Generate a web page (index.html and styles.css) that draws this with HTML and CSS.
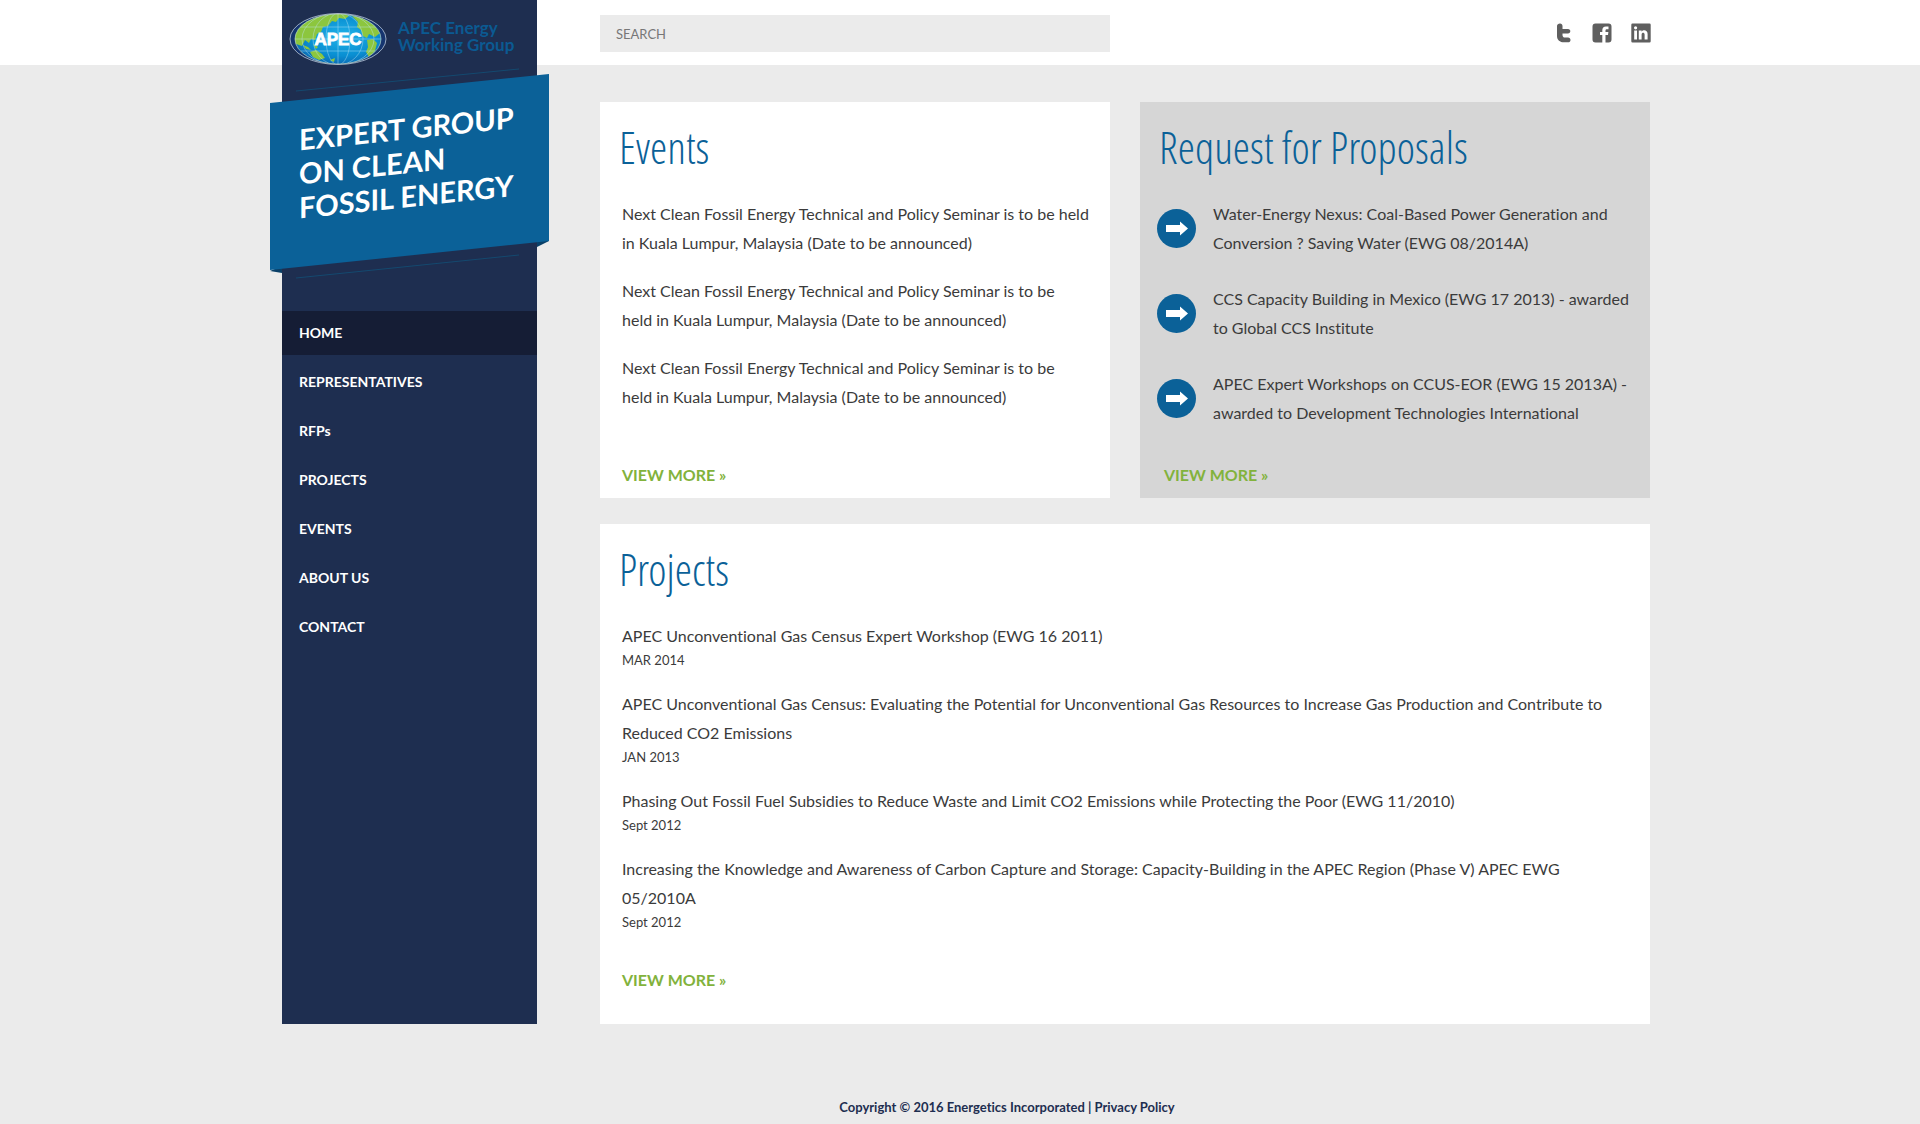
FILE: index.html
```html
<!DOCTYPE html>
<html lang="en">
<head>
<meta charset="utf-8">
<meta name="viewport" content="width=device-width, initial-scale=1">
<title>Expert Group on Clean Fossil Energy</title>
<link rel="stylesheet" href="styles.css">
</head>
<body>
<div class="page">
  <aside class="sidebar">
    <a class="brand" href="#">
      <svg class="brand-logo" viewBox="0 0 98 54" role="img" aria-label="APEC">
        <defs>
          <radialGradient id="sea" cx="55%" cy="45%" r="60%">
            <stop offset="0" stop-color="#22b4ea"/>
            <stop offset="0.6" stop-color="#0a8fd2"/>
            <stop offset="1" stop-color="#0a5ca8"/>
          </radialGradient>
          <clipPath id="globe"><ellipse cx="49" cy="27" rx="43" ry="25"/></clipPath>
        </defs>
        <ellipse cx="49" cy="27" rx="48" ry="25.5" fill="#15356f" stroke="#b9c6d8" stroke-width="0.8"/>
        <g clip-path="url(#globe)">
          <rect width="98" height="54" fill="url(#sea)"/>
          <g fill="#8cc63f">
            <path d="M4 24L10 12L22 5L36 1L54 1L60 4L56 7L50 6L47 10L43 9L39 14L34 15L32 20L28 22L26 28L22 27L20 31L16 28L13 34L7 32Z"/>
            <path d="M63 4L74 6L86 14L91 21L86 25L80 22L78 26L74 24L72 18L68 15L69 10Z"/>
            <path d="M78 28L84 27L88 31L86 39L80 45L77 40L79 35Z"/>
            <path d="M21 40L27 38L33 42L36 46L30 48L24 45Z"/>
            <path d="M14 33L19 35L22 38L17 37ZM24 32L29 35L27 37ZM41 48L46 46L45 50Z"/>
          </g>
          <g fill="none" stroke="#bfe6f7" stroke-width="0.6" opacity="0.7">
            <path d="M49 1V53M6 27H92M11 15H87M12 39H86"/>
            <ellipse cx="49" cy="27" rx="12" ry="26"/>
            <ellipse cx="49" cy="27" rx="25" ry="26"/>
            <ellipse cx="49" cy="27" rx="36" ry="26"/>
          </g>
        </g>
        <ellipse cx="49" cy="27" rx="43" ry="25" fill="none" stroke="#d8e6c8" stroke-width="0.6"/>
        <text class="brand-mark" x="49" y="33" text-anchor="middle">APEC</text>
      </svg>
      <span class="brand-name">APEC Energy<br>Working Group</span>
    </a>

    <div class="banner">
      <svg class="banner-shape" viewBox="0 0 279 212" preserveAspectRatio="none" aria-hidden="true">
        <path d="M26 23L249 1M26 210L249 187" stroke="#14496f" fill="none"/>
        <path d="M0 203L12 205V198ZM279 173L267 179V172Z" fill="#0a4068"/>
        <path d="M0 35L279 6V173L0 202Z" fill="#0b6198"/>
      </svg>
      <h1 class="banner-title">EXPERT GROUP<br>ON CLEAN<br>FOSSIL ENERGY</h1>
    </div>

    <nav class="nav" aria-label="Main">
      <a class="nav-link nav-link-active" href="#" aria-current="page">HOME</a>
      <a class="nav-link" href="#">REPRESENTATIVES</a>
      <a class="nav-link" href="#">RFPs</a>
      <a class="nav-link" href="#">PROJECTS</a>
      <a class="nav-link" href="#">EVENTS</a>
      <a class="nav-link" href="#">ABOUT US</a>
      <a class="nav-link" href="#">CONTACT</a>
    </nav>
  </aside>

  <div class="content">
    <header class="topbar">
      <input class="search" type="search" placeholder="SEARCH" aria-label="Search">
      <div class="social">
        <a class="social-link" href="#" aria-label="Twitter">
          <svg viewBox="0 0 20 20"><path d="M7 0.500C8.500 0.500 9.500 1.500 9.500 3V6H15C16.500 6 17.300 7 17.300 8.200S16.500 10.400 15 10.400H9.500V12C9.500 13.500 10.300 14.600 12 14.600H15C16.500 14.600 17.500 15.600 17.500 17S16.500 19.300 15 19.300H11C7 19.300 4 17 4 13V3C4 1.500 5.300 0.500 7 0.500Z"/></svg>
        </a>
        <a class="social-link" href="#" aria-label="Facebook">
          <svg viewBox="0 0 20 20"><path d="M3.500 0.500H16.500Q19.500 0.500 19.500 3.500V16.500Q19.500 19.500 16.500 19.500H13.500V12H16L16.400 9H13.500V7.500C13.500 6.500 14 6.200 15 6.200H16.500V3.500H14C11.500 3.500 10.300 5 10.300 7.200V9H8V12H10.300V19.500H3.500Q0.500 19.500 0.500 16.500V3.500Q0.500 0.500 3.500 0.500Z"/></svg>
        </a>
        <a class="social-link" href="#" aria-label="LinkedIn">
          <svg viewBox="0 0 20 20"><path fill-rule="evenodd" d="M1.500 0.500H18.500Q19.700 0.500 19.700 1.700V18.300Q19.700 19.500 18.500 19.500H1.500Q0.300 19.500 0.300 18.300V1.700Q0.300 0.500 1.500 0.500ZM3.200 7.500V16.500H6V7.500ZM4.600 3.200A1.600 1.600 0 1 0 4.600 6.400A1.600 1.600 0 1 0 4.600 3.200ZM7.800 7.500V16.500H10.600V11.500C10.600 9 13.600 9 13.600 11.500V16.500H16.600V11C16.600 7 12.300 6.300 10.600 8.700V7.500Z"/></svg>
        </a>
      </div>
    </header>

    <main class="cards">
      <section class="card">
        <h2 class="card-title">Events</h2>
        <div class="entries">
          <p>Next Clean Fossil Energy Technical and Policy Seminar is to be held<br>in Kuala Lumpur, Malaysia (Date to be announced)</p>
          <p>Next Clean Fossil Energy Technical and Policy Seminar is to be<br>held in Kuala Lumpur, Malaysia (Date to be announced)</p>
          <p>Next Clean Fossil Energy Technical and Policy Seminar is to be<br>held in Kuala Lumpur, Malaysia (Date to be announced)</p>
        </div>
        <a class="more" href="#">VIEW MORE »</a>
      </section>

      <section class="card card-grey">
        <h2 class="card-title">Request for Proposals</h2>
        <ul class="proposals">
          <li class="proposal">
            <svg class="arrow" viewBox="0 0 39 39" aria-hidden="true"><circle cx="19.500" cy="19.500" r="19.500"/><path d="M9 16H23V12.500L31 19.500L23 26.500V23H9Z"/></svg>
            <p>Water-Energy Nexus: Coal-Based Power Generation and Conversion ? Saving Water (EWG 08/2014A)</p>
          </li>
          <li class="proposal">
            <svg class="arrow" viewBox="0 0 39 39" aria-hidden="true"><circle cx="19.500" cy="19.500" r="19.500"/><path d="M9 16H23V12.500L31 19.500L23 26.500V23H9Z"/></svg>
            <p>CCS Capacity Building in Mexico (EWG 17 2013) - awarded to Global CCS Institute</p>
          </li>
          <li class="proposal">
            <svg class="arrow" viewBox="0 0 39 39" aria-hidden="true"><circle cx="19.500" cy="19.500" r="19.500"/><path d="M9 16H23V12.500L31 19.500L23 26.500V23H9Z"/></svg>
            <p>APEC Expert Workshops on CCUS-EOR (EWG 15 2013A) - awarded to Development Technologies International</p>
          </li>
        </ul>
        <a class="more" href="#">VIEW MORE »</a>
      </section>

      <section class="card card-wide">
        <h2 class="card-title">Projects</h2>
        <div class="entries">
          <div><p>APEC Unconventional Gas Census Expert Workshop (EWG 16 2011)</p><p class="date">MAR 2014</p></div>
          <div><p>APEC Unconventional Gas Census: Evaluating the Potential for Unconventional Gas Resources to Increase Gas Production and Contribute to Reduced CO2 Emissions</p><p class="date">JAN 2013</p></div>
          <div><p>Phasing Out Fossil Fuel Subsidies to Reduce Waste and Limit CO2 Emissions while Protecting the Poor (EWG 11/2010)</p><p class="date">Sept 2012</p></div>
          <div><p>Increasing the Knowledge and Awareness of Carbon Capture and Storage: Capacity-Building in the APEC Region (Phase V) APEC EWG 05/2010A</p><p class="date">Sept 2012</p></div>
        </div>
        <a class="more" href="#">VIEW MORE »</a>
      </section>
    </main>
  </div>
</div>
<footer class="footer">Copyright © 2016 Energetics Incorporated | <a href="#">Privacy Policy</a></footer>
</body>
</html>
```

FILE: styles.css
```css
* {
  box-sizing: border-box;
}

body {
  margin: 0;
  background: linear-gradient(#fff 65px, #ebebeb 65px);
  color: #3b3b3b;
  font: 16px/29px Lato, sans-serif;
  font-variant-ligatures: none;
}

a {
  color: inherit;
  text-decoration: none;
}

h1,
h2,
p,
ul {
  margin: 0;
  padding: 0;
}

.page,
.footer {
  max-width: 1380px;
  margin: 0 auto;
}

.page {
  display: grid;
  grid-template-columns: 255px minmax(0, 1fr);
  gap: 63px;
  padding-left: 12px;
}

/* Sidebar */
.sidebar {
  background: #1e2e50;
}

.brand {
  display: flex;
  align-items: flex-start;
  gap: 11px;
  padding: 12px 7px 0;
  height: 68px;
}

.brand-logo {
  flex: none;
  width: 98px;
  height: 54px;
}

.brand-mark {
  fill: #fff;
  stroke: #fff;
  stroke-width: 0.8px;
  font: bold 17px "Liberation Sans", sans-serif;
}

.brand-name {
  padding-top: 7px;
  color: #0b5a92;
  font-size: 17px;
  font-weight: 700;
  line-height: 17px;
  white-space: nowrap;
}

.banner {
  position: relative;
  height: 212px;
  margin: 0 -12px;
  padding: 43px 29px;
}

.banner-shape {
  position: absolute;
  inset: 0;
  width: 100%;
  height: 100%;
}

.banner-title {
  position: relative;
  color: #fff;
  font-size: 29px;
  font-weight: 700;
  line-height: 34px;
  white-space: nowrap;
  transform: skewY(-6deg);
}

.nav {
  display: flex;
  flex-direction: column;
  gap: 5px;
  padding-top: 31px;
}

.nav-link {
  padding: 0 17px;
  color: #fff;
  font-size: 14px;
  font-weight: 700;
  line-height: 44px;
}

.nav-link-active {
  background: #151d35;
}

/* Top bar */
.topbar {
  display: grid;
  grid-template-columns: 1fr 1fr;
  gap: 30px;
  align-items: center;
  height: 65px;
  padding-top: 2px;
}

.search {
  width: 100%;
  height: 37px;
  padding: 0 16px;
  border: 0;
  border-radius: 0;
  background: #ebebeb;
  color: #3b3b3b;
  font: 13px Lato, sans-serif;
  appearance: none;
}

.search::placeholder {
  color: #777;
}

.social {
  display: flex;
  justify-content: flex-end;
  gap: 19px;
  margin-right: -1px;
  padding-bottom: 2px;
}

.social-link {
  width: 20px;
  height: 20px;
}

.social-link svg {
  display: block;
  fill: #5f5f5f;
}

/* Cards */
.cards {
  display: grid;
  grid-template-columns: 1fr 1fr;
  gap: 26px 30px;
  padding-top: 37px;
}

.card {
  display: flex;
  flex-direction: column;
  align-items: flex-start;
  padding: 20px 18px 9px;
  background: #fff;
}

.card-grey {
  background: #d6d6d6;
}

.card-wide {
  grid-column: 1 / -1;
  padding: 20px 40px 30px 18px;
}

.card-title {
  margin-bottom: 27px;
  padding-left: 1px;
  color: #0b6198;
  font-family: "Open Sans Condensed Light", "Open Sans Condensed", "Liberation Sans Narrow", "Roboto Condensed", "Open Sans", sans-serif;
  font-size: 44px;
  font-weight: 300;
  line-height: 50px;
}

.entries {
  display: grid;
  gap: 19px;
  padding-left: 4px;
}

.date {
  font-size: 13px;
  line-height: 20px;
}

.proposals {
  display: grid;
  gap: 27px;
  margin-left: -1px;
  list-style: none;
}

.proposal {
  display: flex;
  align-items: center;
  gap: 17px;
}

.arrow {
  flex: none;
  width: 39px;
  height: 39px;
  fill: #0b6198;
}

.arrow path {
  fill: #fff;
}

.more {
  margin-top: auto;
  padding: 33px 4px 0;
  color: #82b23c;
  font-weight: 700;
}

.card-grey .more {
  padding-left: 6px;
}

/* Footer */
.footer {
  padding: 74px 0 8px 94px;
  color: #1e2e50;
  font-size: 13px;
  font-weight: 700;
  line-height: 18px;
  text-align: center;
}
```
